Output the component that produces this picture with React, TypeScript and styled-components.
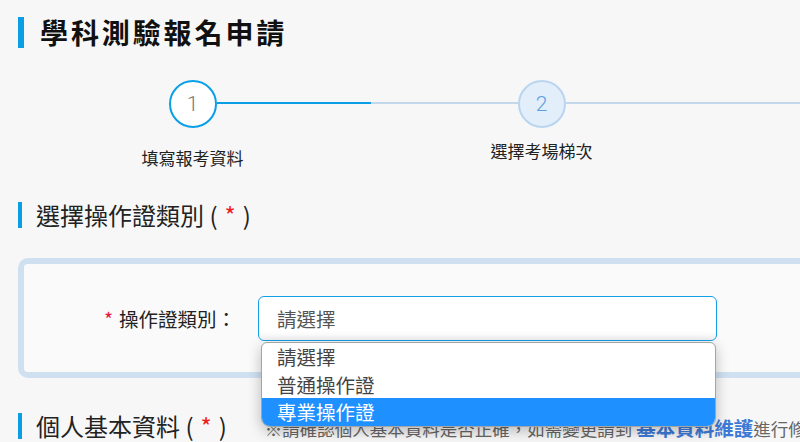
import styled, { createGlobalStyle } from "styled-components";

const GlobalStyle = createGlobalStyle`
    body {
        margin: 0;
        background: #f7f7f7;
        font-family: "Noto Sans CJK TC", "Noto Sans", sans-serif;
        color: #222;
    }
`;

const Page = styled.div`
    width: 800px;
    height: 442px;
    overflow: hidden;
    padding-left: 18px;
    box-sizing: border-box;
`;

const PageTitle = styled.h1`
    margin: 17px 0 0;
    height: 31px;
    line-height: 31px;
    border-left: 6px solid #0a9ee5;
    padding-left: 16px;
    font-size: 28px;
    font-weight: 700;
    letter-spacing: 2.9px;
    color: #111;
`;

const Steps = styled.div`
    display: flex;
    margin-top: 32px;
`;

const Step = styled.div`
    width: 349px;
    flex-shrink: 0;
    display: flex;
    flex-direction: column;
    align-items: center;
`;

const StepHead = styled.div`
    width: 100%;
    display: flex;
    align-items: center;
`;

const Line = styled.div<{ $fill: string }>`
    flex: 1;
    height: 2px;
    margin-top: -2px;
    background: ${(p) => p.$fill};
`;

const Circle = styled.div<{ $active?: boolean }>`
    width: 48px;
    height: 48px;
    box-sizing: border-box;
    border-radius: 50%;
    border: 2px solid ${(p) => (p.$active ? "#0aa0e8" : "#b9d5ef")};
    background: ${(p) => (p.$active ? "#fff" : "#e2eefa")};
    color: ${(p) => (p.$active ? "#777" : "#5d9fe0")};
    display: flex;
    align-items: center;
    justify-content: center;
    font-family: Roboto, "Liberation Sans", sans-serif;
    font-weight: 300;
    font-size: 21px;
`;

const StepLabel = styled.div<{ $offset: number }>`
    margin-top: ${(p) => p.$offset}px;
    font-size: 17px;
    line-height: 22px;
    color: #222;
`;

const SectionHead = styled.div<{ $gap: number }>`
    display: flex;
    align-items: center;
    margin-top: ${(p) => p.$gap}px;
`;

const SectionTitle = styled.h2`
    margin: 0;
    height: 26px;
    line-height: 26px;
    border-left: 4px solid #0a9ee5;
    padding-left: 14px;
    font-size: 24px;
    font-weight: 400;
    color: #222;
    white-space: nowrap;
`;

const Req = styled.span`
    color: #f21c1c;
    margin: 0 7px;
`;

const Card = styled.div`
    margin-top: 30px;
    width: 1000px;
    height: 120px;
    box-sizing: border-box;
    border: 6px solid #cfe1f1;
    border-radius: 10px;
    background: #fafafa;
    padding-top: 32px;
`;

const FormRow = styled.div`
    display: flex;
    align-items: center;
`;

const FieldLabel = styled.label`
    width: 212px;
    text-align: right;
    font-size: 19.5px;
    color: #222;
    margin-right: 22px;
    white-space: nowrap;
`;

const Star = styled.span`
    color: #e8173c;
    margin-right: 6px;
`;

const SelectWrap = styled.div`
    position: relative;
    width: 459px;
`;

const SelectBox = styled.div`
    height: 45px;
    box-sizing: border-box;
    border: 1px solid #14a0e8;
    border-radius: 6px;
    background: #fff;
    box-shadow: inset 0 -8px 8px -6px rgba(0, 0, 0, 0.08);
    padding-left: 18px;
    display: flex;
    align-items: center;
    font-size: 19.5px;
    color: #555;
`;

const Options = styled.ul`
    position: absolute;
    top: 100%;
    left: 3px;
    right: 1px;
    margin: 1px 0 0;
    padding: 0;
    list-style: none;
    background: #fff;
    border: 1px solid #a5a5a5;
    border-radius: 6px 6px 9px 9px;
    overflow: hidden;
    box-shadow: 0 4px 14px rgba(0, 0, 0, 0.25);
    z-index: 2;
`;

const Option = styled.li<{ $selected?: boolean }>`
    height: 27.5px;
    line-height: 28px;
    padding-left: 15px;
    font-size: 19.5px;
    color: ${(p) => (p.$selected ? "#fff" : "#444")};
    background: ${(p) => (p.$selected ? "#1e90ff" : "transparent")};
`;

const Note = styled.p`
    margin: 4px 0 0 38px;
    font-size: 17.5px;
    color: #666;
    white-space: nowrap;
`;

const NoteLink = styled.a`
    color: #3d7ad6;
    font-weight: 700;
    font-size: 19.5px;
    text-decoration: none;
    margin-left: 4px;
`;

const options = ["請選擇", "普通操作證", "專業操作證"];

export default function App() {
    return (
        <Page>
            <GlobalStyle />
            <PageTitle>學科測驗報名申請</PageTitle>

            <Steps>
                <Step>
                    <StepHead>
                        <Line $fill="transparent" />
                        <Circle $active>1</Circle>
                        <Line $fill="#0a9ee5" />
                    </StepHead>
                    <StepLabel $offset={19}>填寫報考資料</StepLabel>
                </Step>
                <Step>
                    <StepHead>
                        <Line $fill="linear-gradient(to right, #0a9ee5 0 4px, #c3d7ea 4px)" />
                        <Circle>2</Circle>
                        <Line $fill="#c3d7ea" />
                    </StepHead>
                    <StepLabel $offset={12}>選擇考場梯次</StepLabel>
                </Step>
                <Step>
                    <StepHead>
                        <Line $fill="#c3d7ea" />
                        <Circle>3</Circle>
                        <Line $fill="transparent" />
                    </StepHead>
                </Step>
            </Steps>

            <SectionHead $gap={33}>
                <SectionTitle>
                    選擇操作證類別 (<Req>*</Req>)
                </SectionTitle>
            </SectionHead>

            <Card>
                <FormRow>
                    <FieldLabel>
                        <Star>*</Star>操作證類別：
                    </FieldLabel>
                    <SelectWrap>
                        <SelectBox>請選擇</SelectBox>
                        <Options>
                            {options.map((o, i) => (
                                <Option key={o} $selected={i === 2}>
                                    {o}
                                </Option>
                            ))}
                        </Options>
                    </SelectWrap>
                </FormRow>
            </Card>

            <SectionHead $gap={31}>
                <SectionTitle>
                    個人基本資料 (<Req>*</Req>)
                </SectionTitle>
                <Note>
                    ※請確認個人基本資料是否正確，如需變更請到
                    <NoteLink href="#">基本資料維護</NoteLink>進行修改。
                </Note>
            </SectionHead>
        </Page>
    );
}
